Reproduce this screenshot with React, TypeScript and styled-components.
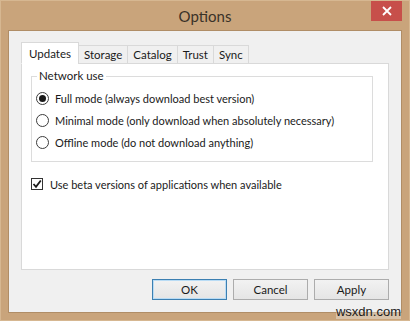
import styled, { createGlobalStyle } from "styled-components";

const GlobalStyle = createGlobalStyle`
  html, body {
    margin: 0;
    padding: 0;
    background: #c9a47b;
  }
  * {
    box-sizing: border-box;
  }
`;

const Window = styled.div`
  position: relative;
  width: 410px;
  height: 321px;
  display: flex;
  flex-direction: column;
  background: #c9a47b;
  border: 1px solid #d6b791;
  font-family: Lato, "Liberation Sans", sans-serif;
  color: #1a1a1a;
  overflow: hidden;
`;

const TitleBar = styled.div`
  height: 30px;
  display: flex;
  align-items: center;
  justify-content: center;
  position: relative;
  font-size: 15px;
  color: #3a3228;
`;

const CloseButton = styled.div`
  position: absolute;
  top: -1px;
  right: 7px;
  width: 31px;
  height: 21px;
  background: #c74f4a;
  display: flex;
  align-items: center;
  justify-content: center;
`;

const Client = styled.div`
  flex: 1;
  margin: 0 7px 7px 7px;
  background: #f0f0f0;
  border: 1px solid #b08d66;
  padding: 11px 12px 12px 12px;
  display: flex;
  flex-direction: column;
`;

const TabStrip = styled.div`
  display: flex;
  align-items: flex-end;
  margin-bottom: -1px;
  position: relative;
  z-index: 1;
`;

const Tab = styled.div<{ $active?: boolean }>`
  height: ${(p) => (p.$active ? "22px" : "19px")};
  padding: 0 ${(p) => (p.$active ? "7px" : "5px")};
  margin-left: ${(p) => (p.$active ? "0" : "-1px")};
  display: flex;
  align-items: center;
  font-size: 11.5px;
  white-space: nowrap;
  background: ${(p) => (p.$active ? "#ffffff" : "#f0f0f0")};
  border: 1px solid #d9d9d9;
  border-bottom: ${(p) => (p.$active ? "1px solid #ffffff" : "1px solid #d9d9d9")};
  &:first-child {
    margin-left: 0;
  }
`;

const Pane = styled.div`
  height: 207px;
  background: #ffffff;
  border: 1px solid #d9d9d9;
  padding: 5px 15px 0 9px;
  display: flex;
  flex-direction: column;
`;

const GroupBox = styled.fieldset`
  margin: 0;
  border: 1px solid #dcdcdc;
  padding: 4px 0 8px 4px;
  display: flex;
  flex-direction: column;
`;

const Legend = styled.legend`
  font-size: 11.5px;
  line-height: 14px;
  padding: 0 2px;
  margin-left: 1px;
  color: #1a1a1a;
`;

const OptionRow = styled.label`
  display: flex;
  align-items: center;
  gap: 6px;
  height: 22px;
  font-size: 11px;
  white-space: nowrap;
`;

const Radio = styled.span<{ $checked?: boolean }>`
  flex-shrink: 0;
  width: 13px;
  height: 13px;
  border-radius: 50%;
  border: 1px solid #3c3c3c;
  background: #ffffff;
  display: flex;
  align-items: center;
  justify-content: center;
  &::after {
    content: "";
    width: 7px;
    height: 7px;
    border-radius: 50%;
    background: ${(p) => (p.$checked ? "#1a1a1a" : "transparent")};
  }
`;

const CheckRow = styled.label`
  display: flex;
  align-items: center;
  gap: 7px;
  height: 14px;
  margin-top: 15px;
  font-size: 11px;
  white-space: nowrap;
`;

const CheckBox = styled.span`
  flex-shrink: 0;
  width: 12px;
  height: 12px;
  border: 1px solid #333333;
  background: #ffffff;
  display: flex;
  align-items: center;
  justify-content: center;
`;

const ButtonRow = styled.div`
  display: flex;
  justify-content: flex-end;
  gap: 6px;
  margin-top: 9px;
`;

const Button = styled.div<{ $default?: boolean }>`
  width: 75px;
  height: 21px;
  display: flex;
  align-items: center;
  justify-content: center;
  font-size: 11.5px;
  background: linear-gradient(#f2f2f2, #e5e5e5);
  border: 1px solid ${(p) => (p.$default ? "#3c7fb1" : "#acacac")};
  box-shadow: ${(p) => (p.$default ? "inset 0 0 0 1px #b9dcf5" : "none")};
`;

const Watermark = styled.div`
  position: absolute;
  right: 8px;
  bottom: 1px;
  font-family: "Liberation Sans", sans-serif;
  font-size: 13px;
  color: #1a1a1a;
  background: rgba(240, 240, 240, 0.4);
`;

export default function App() {
  return (
    <>
      <GlobalStyle />
      <Window>
        <TitleBar>
          Options
          <CloseButton>
            <svg width="10" height="10" viewBox="0 0 10 10">
              <path d="M1 1 L9 9 M9 1 L1 9" stroke="#ffffff" strokeWidth="1.8" />
            </svg>
          </CloseButton>
        </TitleBar>
        <Client>
          <TabStrip>
            <Tab $active>Updates</Tab>
            <Tab>Storage</Tab>
            <Tab>Catalog</Tab>
            <Tab>Trust</Tab>
            <Tab>Sync</Tab>
          </TabStrip>
          <Pane>
            <GroupBox>
              <Legend>Network use</Legend>
              <OptionRow>
                <Radio $checked />
                Full mode (always download best version)
              </OptionRow>
              <OptionRow>
                <Radio />
                Minimal mode (only download when absolutely necessary)
              </OptionRow>
              <OptionRow>
                <Radio />
                Offline mode (do not download anything)
              </OptionRow>
            </GroupBox>
            <CheckRow>
              <CheckBox>
                <svg width="10" height="10" viewBox="0 0 10 10">
                  <path d="M1.5 5 L4 7.8 L8.8 1.5" stroke="#1a1a1a" strokeWidth="1.8" fill="none" />
                </svg>
              </CheckBox>
              Use beta versions of applications when available
            </CheckRow>
          </Pane>
          <ButtonRow>
            <Button $default>OK</Button>
            <Button>Cancel</Button>
            <Button>Apply</Button>
          </ButtonRow>
        </Client>
        <Watermark>wsxdn.com</Watermark>
      </Window>
    </>
  );
}
